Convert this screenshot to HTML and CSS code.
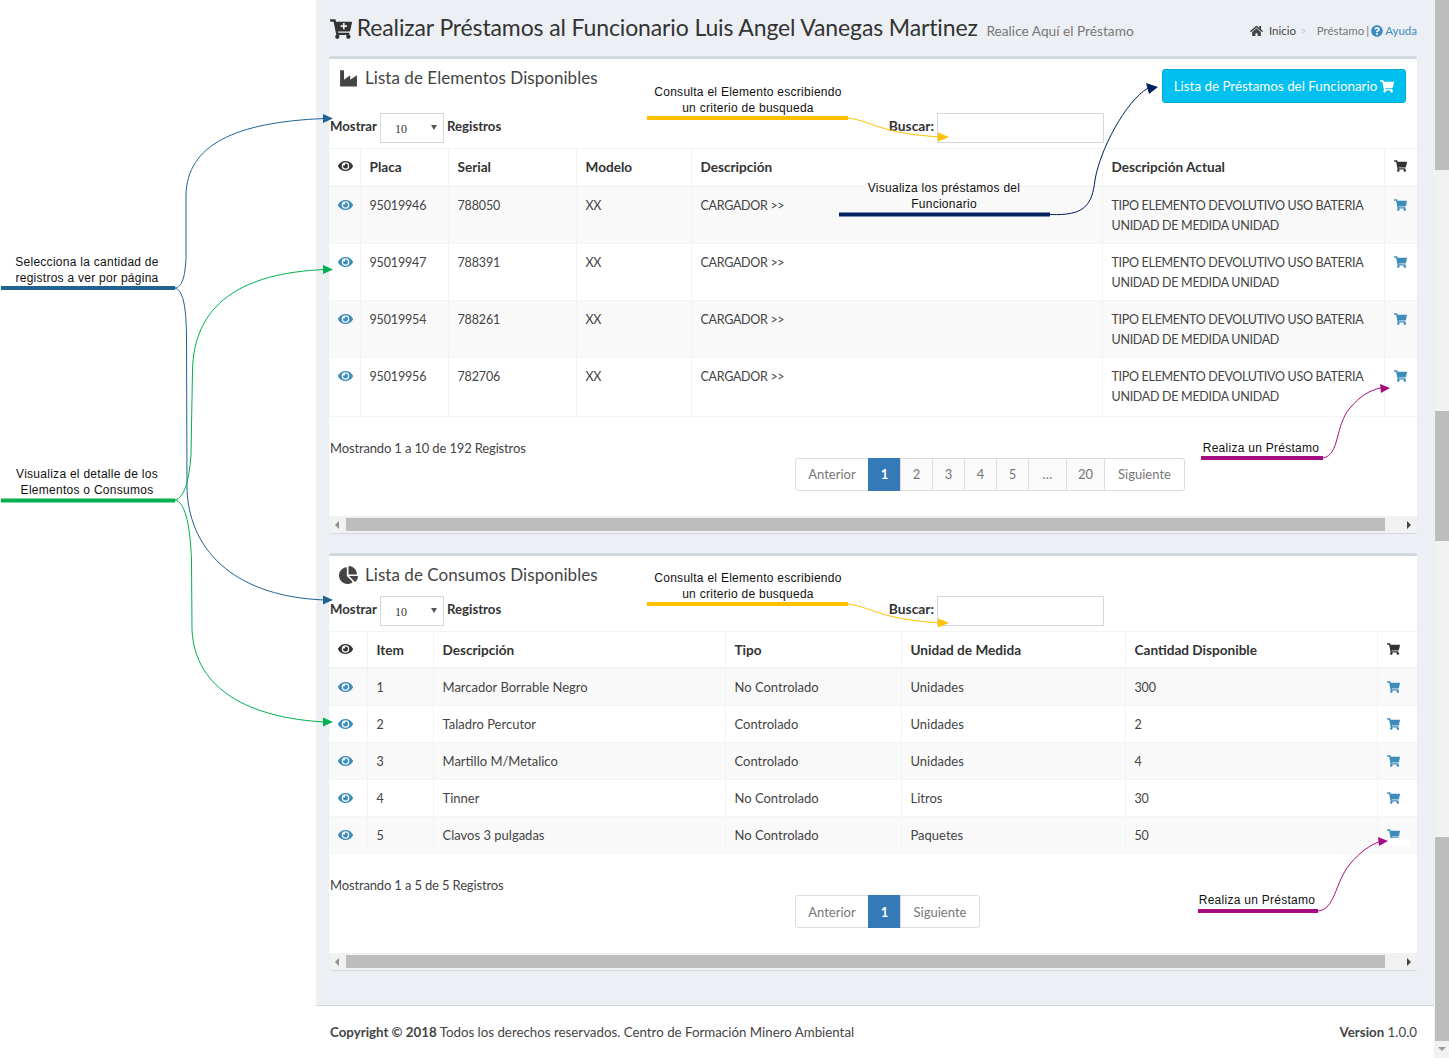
FILE: index.html
```html
<!DOCTYPE html>
<html lang="es">
<head>
  <meta charset="UTF-8">
  <title>Realizar Préstamos</title>
  <link rel="stylesheet" href="styles.css">
</head>
<body>
  <svg class="icon-defs" width="0" height="0">
    <symbol id="i-cart" viewBox="0 0 576 512"><path d="M528.12 301.319l47.273-208C578.806 78.301 567.391 64 551.99 64H159.208l-9.166-44.81C147.758 8.021 137.93 0 126.529 0H24C10.745 0 0 10.745 0 24v16c0 13.255 10.745 24 24 24h69.883l70.248 343.435C147.325 417.1 136 435.222 136 456c0 30.928 25.072 56 56 56s56-25.072 56-56c0-15.674-6.447-29.835-16.824-40h209.647C430.447 426.165 424 440.326 424 456c0 30.928 25.072 56 56 56s56-25.072 56-56c0-22.172-12.888-41.332-31.579-50.405l5.517-24.276c3.413-15.018-8.002-29.319-23.403-29.319H218.117l-6.545-32h293.145c11.206 0 20.92-7.754 23.403-18.681z"/></symbol>
    <symbol id="i-cart-plus" viewBox="0 0 576 512"><path d="M528.12 301.319l47.273-208C578.806 78.301 567.391 64 551.99 64H159.208l-9.166-44.81C147.758 8.021 137.93 0 126.529 0H24C10.745 0 0 10.745 0 24v16c0 13.255 10.745 24 24 24h69.883l70.248 343.435C147.325 417.1 136 435.222 136 456c0 30.928 25.072 56 56 56s56-25.072 56-56c0-15.674-6.447-29.835-16.824-40h209.647C430.447 426.165 424 440.326 424 456c0 30.928 25.072 56 56 56s56-25.072 56-56c0-22.172-12.888-41.332-31.579-50.405l5.517-24.276c3.413-15.018-8.002-29.319-23.403-29.319H218.117l-6.545-32h293.145c11.206 0 20.92-7.754 23.403-18.681z"/><path fill="#ecf0f5" d="M340 100h44v60h60v44h-60v60h-44v-60h-60v-44h60z"/></symbol>
    <symbol id="i-eye" viewBox="0 0 576 512"><path d="M572.52 241.4C518.29 135.59 410.93 64 288 64S57.68 135.64 3.48 241.41a32.35 32.35 0 0 0 0 29.19C57.71 376.41 165.07 448 288 448s230.32-71.64 284.52-177.41a32.35 32.35 0 0 0 0-29.19zM288 400a144 144 0 1 1 144-144 143.93 143.93 0 0 1-144 144zm0-240a95.31 95.31 0 0 0-25.31 3.79 47.85 47.85 0 0 1-66.9 66.9A95.78 95.78 0 1 0 288 160z"/></symbol>
    <symbol id="i-home" viewBox="0 0 576 512"><path d="M280.37 148.26L96 300.11V464a16 16 0 0 0 16 16l112.06-.29a16 16 0 0 0 15.92-16V368a16 16 0 0 1 16-16h64a16 16 0 0 1 16 16v95.64a16 16 0 0 0 16 16.05L464 480a16 16 0 0 0 16-16V300L295.67 148.26a12.19 12.19 0 0 0-15.3 0zM571.6 251.47L488 182.56V44.05a12 12 0 0 0-12-12h-56a12 12 0 0 0-12 12v72.61L318.47 43a48 48 0 0 0-61 0L4.34 251.47a12 12 0 0 0-1.6 16.9l25.5 31A12 12 0 0 0 45.15 301l235.22-193.74a12.19 12.19 0 0 1 15.3 0L530.9 301a12 12 0 0 0 16.9-1.6l25.5-31a12 12 0 0 0-1.7-16.93z"/></symbol>
    <symbol id="i-help" viewBox="0 0 512 512"><path d="M504 256c0 136.997-111.043 248-248 248S8 392.997 8 256C8 119.083 119.043 8 256 8s248 111.083 248 248zM262.655 90c-54.497 0-89.255 22.957-116.549 63.758-3.536 5.286-2.353 12.415 2.715 16.258l34.699 26.31c5.205 3.947 12.621 3.008 16.665-2.122 17.864-22.658 30.113-35.797 57.303-35.797 20.429 0 45.698 13.148 45.698 32.958 0 14.976-12.363 22.667-32.534 33.976C247.128 238.528 216 254.941 216 296v4c0 6.627 5.373 12 12 12h56c6.627 0 12-5.373 12-12v-1.333c0-28.462 83.186-29.647 83.186-106.667 0-58.002-60.165-102-116.531-102zM256 338c-25.365 0-46 20.635-46 46 0 25.364 20.635 46 46 46s46-20.636 46-46c0-25.365-20.635-46-46-46z"/></symbol>
    <symbol id="i-pie" viewBox="0 0 544 512"><path d="M527.79 288H290.5l158.03 158.03c6.04 6.04 15.98 6.53 22.19.68 38.7-36.46 65.32-85.61 73.13-140.86 1.34-9.46-6.51-17.85-16.06-17.85zm-15.83-64.8C503.72 103.74 408.26 8.28 288.8.04 279.68-.59 272 7.1 272 16.24V240h223.77c9.14 0 16.82-7.68 16.19-16.8zM224 288V50.71c0-9.55-8.39-17.4-17.84-16.06C86.99 51.49-4.1 155.6.14 280.37 4.5 408.51 114.83 513.59 243.03 511.98c50.4-.63 96.97-16.87 135.26-44.03 7.9-5.6 8.42-17.23 1.57-24.08L224 288z"/></symbol>
    <symbol id="i-industry" viewBox="0 0 512 512"><path d="M16 496V32h112v272l176-128v128l192-128v320z"/></symbol>
  </svg>

  <div class="page">
    <div class="notes-col"></div>

    <div class="main">
      <header class="content-head">
        <h1 class="page-title">
          <svg class="title-cart"><use href="#i-cart-plus"/></svg>
          Realizar Préstamos al Funcionario Luis Angel Vanegas Martinez
          <small>Realice Aquí el Préstamo</small>
        </h1>
        <nav class="crumbs">
          <svg class="crumb-home"><use href="#i-home"/></svg>
          <span class="crumb-on">Inicio</span>
          <span class="crumb-sep">&gt;</span>
          <span>Préstamo</span>
          <span>|</span>
          <svg class="crumb-help"><use href="#i-help"/></svg>
          <span class="crumb-link">Ayuda</span>
        </nav>
      </header>

      <section class="box">
        <div class="box-head box-head-tall">
          <h2 class="box-title"><svg class="box-icon"><use href="#i-industry"/></svg>Lista de Elementos Disponibles</h2>
          <a class="btn-info">Lista de Préstamos del Funcionario <svg class="btn-cart"><use href="#i-cart"/></svg></a>
        </div>
        <div class="controls">
          <label class="ctl-label">Mostrar</label>
          <div class="select-wrap"><select class="ctl-select"><option>10</option></select></div>
          <label class="ctl-label">Registros</label>
          <label class="ctl-label ctl-search">Buscar:</label>
          <input class="ctl-input" type="text">
        </div>
        <table class="grid grid-elem">
          <colgroup><col class="e1"><col class="e2"><col class="e3"><col class="e4"><col class="e5"><col class="e6"><col class="e7"></colgroup>
          <thead>
            <tr><th><svg class="ico ico-dark"><use href="#i-eye"/></svg></th><th>Placa</th><th>Serial</th><th>Modelo</th><th>Descripción</th><th>Descripción Actual</th><th><svg class="ico ico-dark"><use href="#i-cart"/></svg></th></tr>
          </thead>
          <tbody>
            <tr><td><svg class="ico"><use href="#i-eye"/></svg></td><td class="num">95019946</td><td class="num">788050</td><td class="caps">XX</td><td class="caps">CARGADOR &gt;&gt;</td><td class="caps">TIPO ELEMENTO DEVOLUTIVO USO BATERIA<br>UNIDAD DE MEDIDA UNIDAD</td><td><svg class="ico"><use href="#i-cart"/></svg></td></tr>
            <tr><td><svg class="ico"><use href="#i-eye"/></svg></td><td class="num">95019947</td><td class="num">788391</td><td class="caps">XX</td><td class="caps">CARGADOR &gt;&gt;</td><td class="caps">TIPO ELEMENTO DEVOLUTIVO USO BATERIA<br>UNIDAD DE MEDIDA UNIDAD</td><td><svg class="ico"><use href="#i-cart"/></svg></td></tr>
            <tr><td><svg class="ico"><use href="#i-eye"/></svg></td><td class="num">95019954</td><td class="num">788261</td><td class="caps">XX</td><td class="caps">CARGADOR &gt;&gt;</td><td class="caps">TIPO ELEMENTO DEVOLUTIVO USO BATERIA<br>UNIDAD DE MEDIDA UNIDAD</td><td><svg class="ico"><use href="#i-cart"/></svg></td></tr>
            <tr class="row-last"><td><svg class="ico"><use href="#i-eye"/></svg></td><td class="num">95019956</td><td class="num">782706</td><td class="caps">XX</td><td class="caps">CARGADOR &gt;&gt;</td><td class="caps">TIPO ELEMENTO DEVOLUTIVO USO BATERIA<br>UNIDAD DE MEDIDA UNIDAD</td><td><svg class="ico"><use href="#i-cart"/></svg></td></tr>
          </tbody>
        </table>
        <div class="info">Mostrando 1 a 10 de 192 Registros</div>
        <ul class="pager">
          <li class="pg-edge pg-first">Anterior</li>
          <li class="pg-num pg-active">1</li>
          <li class="pg-num">2</li>
          <li class="pg-num">3</li>
          <li class="pg-num">4</li>
          <li class="pg-num">5</li>
          <li class="pg-wide">…</li>
          <li class="pg-wide">20</li>
          <li class="pg-edge pg-last">Siguiente</li>
        </ul>
        <div class="hscroll"><span class="arrow-left"></span><span class="hthumb"></span><span class="arrow-right"></span></div>
      </section>

      <section class="box box-second">
        <div class="box-head">
          <h2 class="box-title"><svg class="box-icon"><use href="#i-pie"/></svg>Lista de Consumos Disponibles</h2>
        </div>
        <div class="controls">
          <label class="ctl-label">Mostrar</label>
          <div class="select-wrap"><select class="ctl-select"><option>10</option></select></div>
          <label class="ctl-label">Registros</label>
          <label class="ctl-label ctl-search">Buscar:</label>
          <input class="ctl-input" type="text">
        </div>
        <table class="grid grid-cons">
          <colgroup><col class="c1"><col class="c2"><col class="c3"><col class="c4"><col class="c5"><col class="c6"><col class="c7"></colgroup>
          <thead>
            <tr><th><svg class="ico ico-dark"><use href="#i-eye"/></svg></th><th>Item</th><th>Descripción</th><th>Tipo</th><th>Unidad de Medida</th><th>Cantidad Disponible</th><th><svg class="ico ico-dark"><use href="#i-cart"/></svg></th></tr>
          </thead>
          <tbody>
            <tr><td><svg class="ico"><use href="#i-eye"/></svg></td><td class="num">1</td><td>Marcador Borrable Negro</td><td>No Controlado</td><td>Unidades</td><td class="num">300</td><td><svg class="ico"><use href="#i-cart"/></svg></td></tr>
            <tr><td><svg class="ico"><use href="#i-eye"/></svg></td><td class="num">2</td><td>Taladro Percutor</td><td>Controlado</td><td>Unidades</td><td class="num">2</td><td><svg class="ico"><use href="#i-cart"/></svg></td></tr>
            <tr><td><svg class="ico"><use href="#i-eye"/></svg></td><td class="num">3</td><td>Martillo M/Metalico</td><td>Controlado</td><td>Unidades</td><td class="num">4</td><td><svg class="ico"><use href="#i-cart"/></svg></td></tr>
            <tr><td><svg class="ico"><use href="#i-eye"/></svg></td><td class="num">4</td><td>Tinner</td><td>No Controlado</td><td>Litros</td><td class="num">30</td><td><svg class="ico"><use href="#i-cart"/></svg></td></tr>
            <tr><td><svg class="ico"><use href="#i-eye"/></svg></td><td class="num">5</td><td>Clavos 3 pulgadas</td><td>No Controlado</td><td>Paquetes</td><td class="num">50</td><td><svg class="ico"><use href="#i-cart"/></svg></td></tr>
          </tbody>
        </table>
        <div class="info">Mostrando 1 a 5 de 5 Registros</div>
        <ul class="pager">
          <li class="pg-edge pg-first">Anterior</li>
          <li class="pg-num pg-active">1</li>
          <li class="pg-edge pg-last pg-next">Siguiente</li>
        </ul>
        <div class="hscroll"><span class="arrow-left"></span><span class="hthumb"></span><span class="arrow-right"></span></div>
      </section>

      <footer class="foot">
        <div><b>Copyright © 2018</b> Todos los derechos reservados. Centro de Formación Minero Ambiental</div>
        <div><b>Version</b> 1.0.0</div>
      </footer>
    </div>

    <div class="vscroll">
      <span class="vthumb vthumb-a"></span>
      <span class="vthumb vthumb-b"></span>
      <span class="vthumb vthumb-c"></span>
      <span class="arrow-down"></span>
    </div>
  </div>

  <!-- flechas y lineas de las anotaciones -->
  <svg class="overlay" width="1449" height="1058" viewBox="0 0 1449 1058">
    <rect x="1388" y="838" width="22" height="8" fill="#fff"/>
    <g fill="none" stroke-width="1">
      <g stroke="#1f6391">
        <path d="M175 288C182 287 185 278 186 258L186 195C187 145 235 122 325 118.5"/>
        <path d="M175 288C182 290 186 302 186.500 335L187 490C190 555 240 597 325 600"/>
      </g>
      <g stroke="#00b050">
        <path d="M175 500C184 498 189 482 191 455L192.500 370C194 305 240 273 325 269.500"/>
        <path d="M175 500C184 502 190 520 191.500 560L192 630C195 690 250 718 325 722"/>
      </g>
      <g stroke="#ffc000">
        <path d="M848 118C872 121 878 133 940 137"/>
        <path d="M848 604C872 607 878 619 940 623"/>
      </g>
      <path stroke="#002060" d="M1050 214.500C1085 216 1092 205 1095 180C1100 150 1125 102 1148 88"/>
      <g stroke="#a50e82">
        <path d="M1323 458C1340 455 1335 425 1350 408C1360 396 1370 390 1381 388"/>
        <path d="M1318 911C1335 910 1335 882 1350 864C1360 852 1370 845 1380 841.500"/>
      </g>
    </g>
    <g>
      <rect x="1" y="286" width="174" height="4" fill="#1f6391"/>
      <rect x="1" y="498.500" width="174" height="4" fill="#00b050"/>
      <rect x="647" y="116" width="201" height="4" fill="#ffc000"/>
      <rect x="647" y="602" width="201" height="4" fill="#ffc000"/>
      <rect x="839" y="212.500" width="211" height="4" fill="#002060"/>
      <rect x="1201" y="456" width="122" height="4" fill="#a50e82"/>
      <rect x="1198" y="909" width="120" height="4" fill="#a50e82"/>
    </g>
    <g>
      <path fill="#1f6391" d="M323 114L333 118.500L323 123z"/>
      <path fill="#1f6391" d="M323 595.500L333 600L323 604.500z"/>
      <path fill="#00b050" d="M323 265L333 269.500L323 274z"/>
      <path fill="#00b050" d="M323 717.500L333 722L323 726.500z"/>
      <path fill="#ffc000" d="M938 132.500L949 137L938 141.500z"/>
      <path fill="#ffc000" d="M938 618.500L949 623L938 627.500z"/>
      <path fill="#002060" d="M1146 83L1158 87L1149 94z"/>
      <path fill="#a50e82" d="M1380 384L1390 388L1381 393z"/>
      <path fill="#a50e82" d="M1378 837L1388 841L1379 846z"/>
    </g>
  </svg>

  <div class="note note-sel">Selecciona la cantidad de<br>registros a ver por página</div>
  <div class="note note-det">Visualiza el detalle de los<br>Elementos o Consumos</div>
  <div class="note note-q1">Consulta el Elemento escribiendo<br>un criterio de busqueda</div>
  <div class="note note-q2">Consulta el Elemento escribiendo<br>un criterio de busqueda</div>
  <div class="note note-fun">Visualiza los préstamos del<br>Funcionario</div>
  <div class="note note-p1">Realiza un Préstamo</div>
  <div class="note note-p2">Realiza un Préstamo</div>
</body>
</html>
```

FILE: styles.css
```css
* {
  box-sizing: border-box;
}
html, body {
  margin: 0;
  height: 1058px;
  overflow: hidden;
  background: #fff;
}
body {
  position: relative;
  font-family: "Lato", "Liberation Sans", sans-serif;
  font-size: 13px;
  line-height: 20px;
  color: #444;
}
.icon-defs {
  position: absolute;
}

.page {
  display: flex;
  height: 1058px;
}
.notes-col {
  width: 316px;
  flex: none;
}
.main {
  width: 1118px;
  flex: none;
  display: flex;
  flex-direction: column;
  background: #ecf0f5;
  padding-left: 13px;
}

/* cabecera */
.content-head {
  flex: none;
  height: 56px;
  padding: 2px 17px 0 1px;
  display: flex;
  justify-content: space-between;
  align-items: center;
}
.page-title {
  margin: 0;
  font-size: 23px;
  font-weight: 400;
  line-height: 30px;
  color: #333;
  letter-spacing: -0.13px;
}
.page-title small {
  font-size: 13.7px;
  color: #777;
  margin-left: 3px;
  letter-spacing: 0;
}
.title-cart {
  width: 22px;
  height: 20px;
  margin-right: -1px;
  fill: #333;
  vertical-align: -3px;
}
.crumbs {
  display: flex;
  align-items: center;
  gap: 2px;
  margin-top: 4px;
  font-size: 11.5px;
  color: #777;
}
.crumb-home {
  width: 13px;
  height: 12px;
  fill: #444;
  margin-right: 4px;
}
.crumb-on {
  color: #444;
}
.crumb-sep {
  color: #ccc;
  margin: 0 8px 0 2px;
}
.crumb-help {
  width: 12px;
  height: 12px;
  fill: #3c8dbc;
}
.crumb-link {
  color: #3c8dbc;
}

/* cajas */
.box {
  flex: none;
  width: 1088px;
  background: #fff;
  border-top: 3px solid #d2d6de;
  border-radius: 3px;
  box-shadow: 0 1px 1px rgba(0, 0, 0, 0.1);
}
.box-second {
  margin-top: 20px;
}
.box-head {
  height: 40px;
  padding: 7px 11px 0 10px;
  display: flex;
  justify-content: space-between;
  align-items: flex-start;
}
.box-head-tall {
  height: 54px;
}
.box-title {
  margin: 0;
  font-size: 17px;
  font-weight: 400;
  line-height: 24px;
  letter-spacing: 0.05px;
  color: #444;
  display: flex;
  align-items: center;
}
.box-icon {
  width: 19px;
  height: 18px;
  fill: #444;
  margin-right: 7px;
}
.btn-info {
  margin-top: 3px;
  height: 34px;
  width: 244px;
  display: flex;
  align-items: center;
  justify-content: center;
  gap: 3px;
  background: #00c0ef;
  border: 1px solid #00acd6;
  border-radius: 3px;
  font-size: 13.4px;
  color: #fff;
}
.btn-cart {
  width: 14px;
  height: 13px;
  fill: #fff;
}

/* filtros */
.controls {
  height: 30px;
  margin-bottom: 5px;
  padding: 0 313px 0 1px;
  display: flex;
  align-items: center;
  gap: 3px;
}
.ctl-label {
  margin-bottom: 4px;
  font-size: 13.2px;
  font-weight: 700;
  color: #333;
}
.ctl-search {
  margin-left: auto;
  font-size: 13.8px;
}
.select-wrap {
  position: relative;
  width: 64px;
  height: 30px;
}
.select-wrap::after {
  content: "";
  position: absolute;
  right: 7px;
  top: 12px;
  border-left: 3px solid transparent;
  border-right: 3px solid transparent;
  border-top: 5px solid #555;
}
.ctl-select {
  appearance: none;
  width: 100%;
  height: 30px;
  padding: 2px 0 0 14px;
  background: #fff;
  border: 1px solid #d2d6de;
  border-radius: 0;
  font-family: "Liberation Serif", serif;
  font-size: 12px;
  color: #333;
}
.ctl-input {
  width: 167px;
  height: 30px;
  border: 1px solid #d2d6de;
  background: #fff;
}

/* tablas */
.grid {
  width: 1088px;
  table-layout: fixed;
  border-collapse: collapse;
}
.grid th, .grid td {
  border: 1px solid #f4f4f4;
  padding: 9px 9px 7px;
  text-align: left;
  vertical-align: top;
  font-weight: 400;
}
.grid th {
  padding: 8px 9px 7.5px;
  font-size: 13.6px;
  font-weight: 700;
  color: #333;
  border-bottom-width: 2px;
}
.grid tr > :first-child {
  border-left: 0;
}
.grid tr > :last-child {
  border-right: 0;
}
.grid tbody tr:nth-child(odd) {
  background: #f9f9f9;
}
.grid .num {
  font-size: 12.5px;
  letter-spacing: -0.15px;
}
.grid .caps {
  font-size: 12.5px;
  letter-spacing: -0.3px;
}
.grid-cons tbody td {
  padding: 8px 9px;
}
.grid-cons tbody td.num {
  padding: 9px 9px 7px;
}
.row-last td {
  padding-bottom: 9px;
}
.ico {
  display: block;
  width: 15px;
  height: 14px;
  margin-top: 2px;
  fill: #3c8dbc;
}
.grid-cons tbody .ico {
  margin-top: 3px;
}
.grid tr > :last-child .ico {
  width: 13px;
}
.grid .ico-dark {
  fill: #333;
}
.e1 { width: 31px; }
.e2 { width: 88px; }
.e3 { width: 128px; }
.e4 { width: 115px; }
.e5 { width: 411px; }
.e6 { width: 282px; }
.e7 { width: 33px; }
.c1 { width: 38px; }
.c2 { width: 66px; }
.c3 { width: 292px; }
.c4 { width: 176px; }
.c5 { width: 224px; }
.c6 { width: 252px; }
.c7 { width: 40px; }

/* paginacion */
.info {
  margin-top: 21px;
  padding-left: 1px;
  height: 20px;
  letter-spacing: -0.15px;
}
.pager {
  list-style: none;
  margin: 0 0 25px 466px;
  padding: 0;
  display: flex;
  height: 33px;
  color: #777;
}
.pager li {
  display: flex;
  align-items: center;
  justify-content: center;
  background: #fafafa;
  border: 1px solid #ddd;
  margin-left: -1px;
}
.pager .pg-edge {
  background: #fff;
}
.pg-first {
  width: 74px;
  border-radius: 3px 0 0 3px;
}
.pager .pg-first {
  margin-left: 0;
}
.pg-last {
  width: 81px;
  border-radius: 0 3px 3px 0;
}
.pg-num {
  width: 33px;
}
.pg-wide {
  width: 39px;
}
.pager .pg-active {
  background: #337ab7;
  border-color: #337ab7;
  color: #fff;
  font-weight: 700;
}
.pg-next {
  width: 80px;
}

/* barras de desplazamiento */
.hscroll {
  height: 17px;
  background: #f1f1f1;
  display: flex;
  align-items: center;
  position: relative;
}
.hthumb {
  display: block;
  margin-left: 17px;
  width: 1039px;
  height: 13px;
  background: #bdbdbd;
}
.arrow-left, .arrow-right {
  position: absolute;
  top: 5px;
  border-top: 4px solid transparent;
  border-bottom: 4px solid transparent;
}
.arrow-left {
  left: 6px;
  border-right: 4px solid #8f8f8f;
}
.arrow-right {
  right: 6px;
  border-left: 4px solid #444;
}
.vscroll {
  width: 15px;
  flex: none;
  background: #f1f1f1;
  position: relative;
  display: flex;
  flex-direction: column;
  align-items: flex-end;
}
.vthumb {
  display: block;
  width: 14px;
  background: #bdbdbd;
}
.vthumb-a {
  height: 170px;
}
.vthumb-b {
  height: 130px;
  margin-top: 241px;
}
.vthumb-c {
  height: 204px;
  margin-top: 296px;
}
.arrow-down {
  position: absolute;
  right: 3px;
  top: 1047px;
  border-left: 4px solid transparent;
  border-right: 4px solid transparent;
  border-top: 4px solid #9a9a9a;
}

/* pie */
.foot {
  flex: none;
  margin-top: auto;
  margin-left: -13px;
  height: 53px;
  padding: 0 17px 0 14px;
  background: #fff;
  border-top: 1px solid #d2d6de;
  display: flex;
  justify-content: space-between;
  align-items: center;
  font-size: 13.3px;
  color: #444;
}

/* anotaciones sobre la captura */
.overlay {
  position: absolute;
  left: 0;
  top: 0;
  pointer-events: none;
}
.note {
  position: absolute;
  font-family: "Liberation Sans", Arial, sans-serif;
  font-size: 12px;
  line-height: 16px;
  letter-spacing: 0.27px;
  color: #111;
  text-align: center;
  white-space: nowrap;
  transform: translateX(-50%);
}
.note-sel { left: 87px; top: 254px; }
.note-det { left: 87px; top: 466px; }
.note-q1 { left: 748px; top: 84px; }
.note-q2 { left: 748px; top: 570px; }
.note-fun { left: 944px; top: 180px; }
.note-p1 { left: 1261px; top: 440px; }
.note-p2 { left: 1257px; top: 892px; }
```
